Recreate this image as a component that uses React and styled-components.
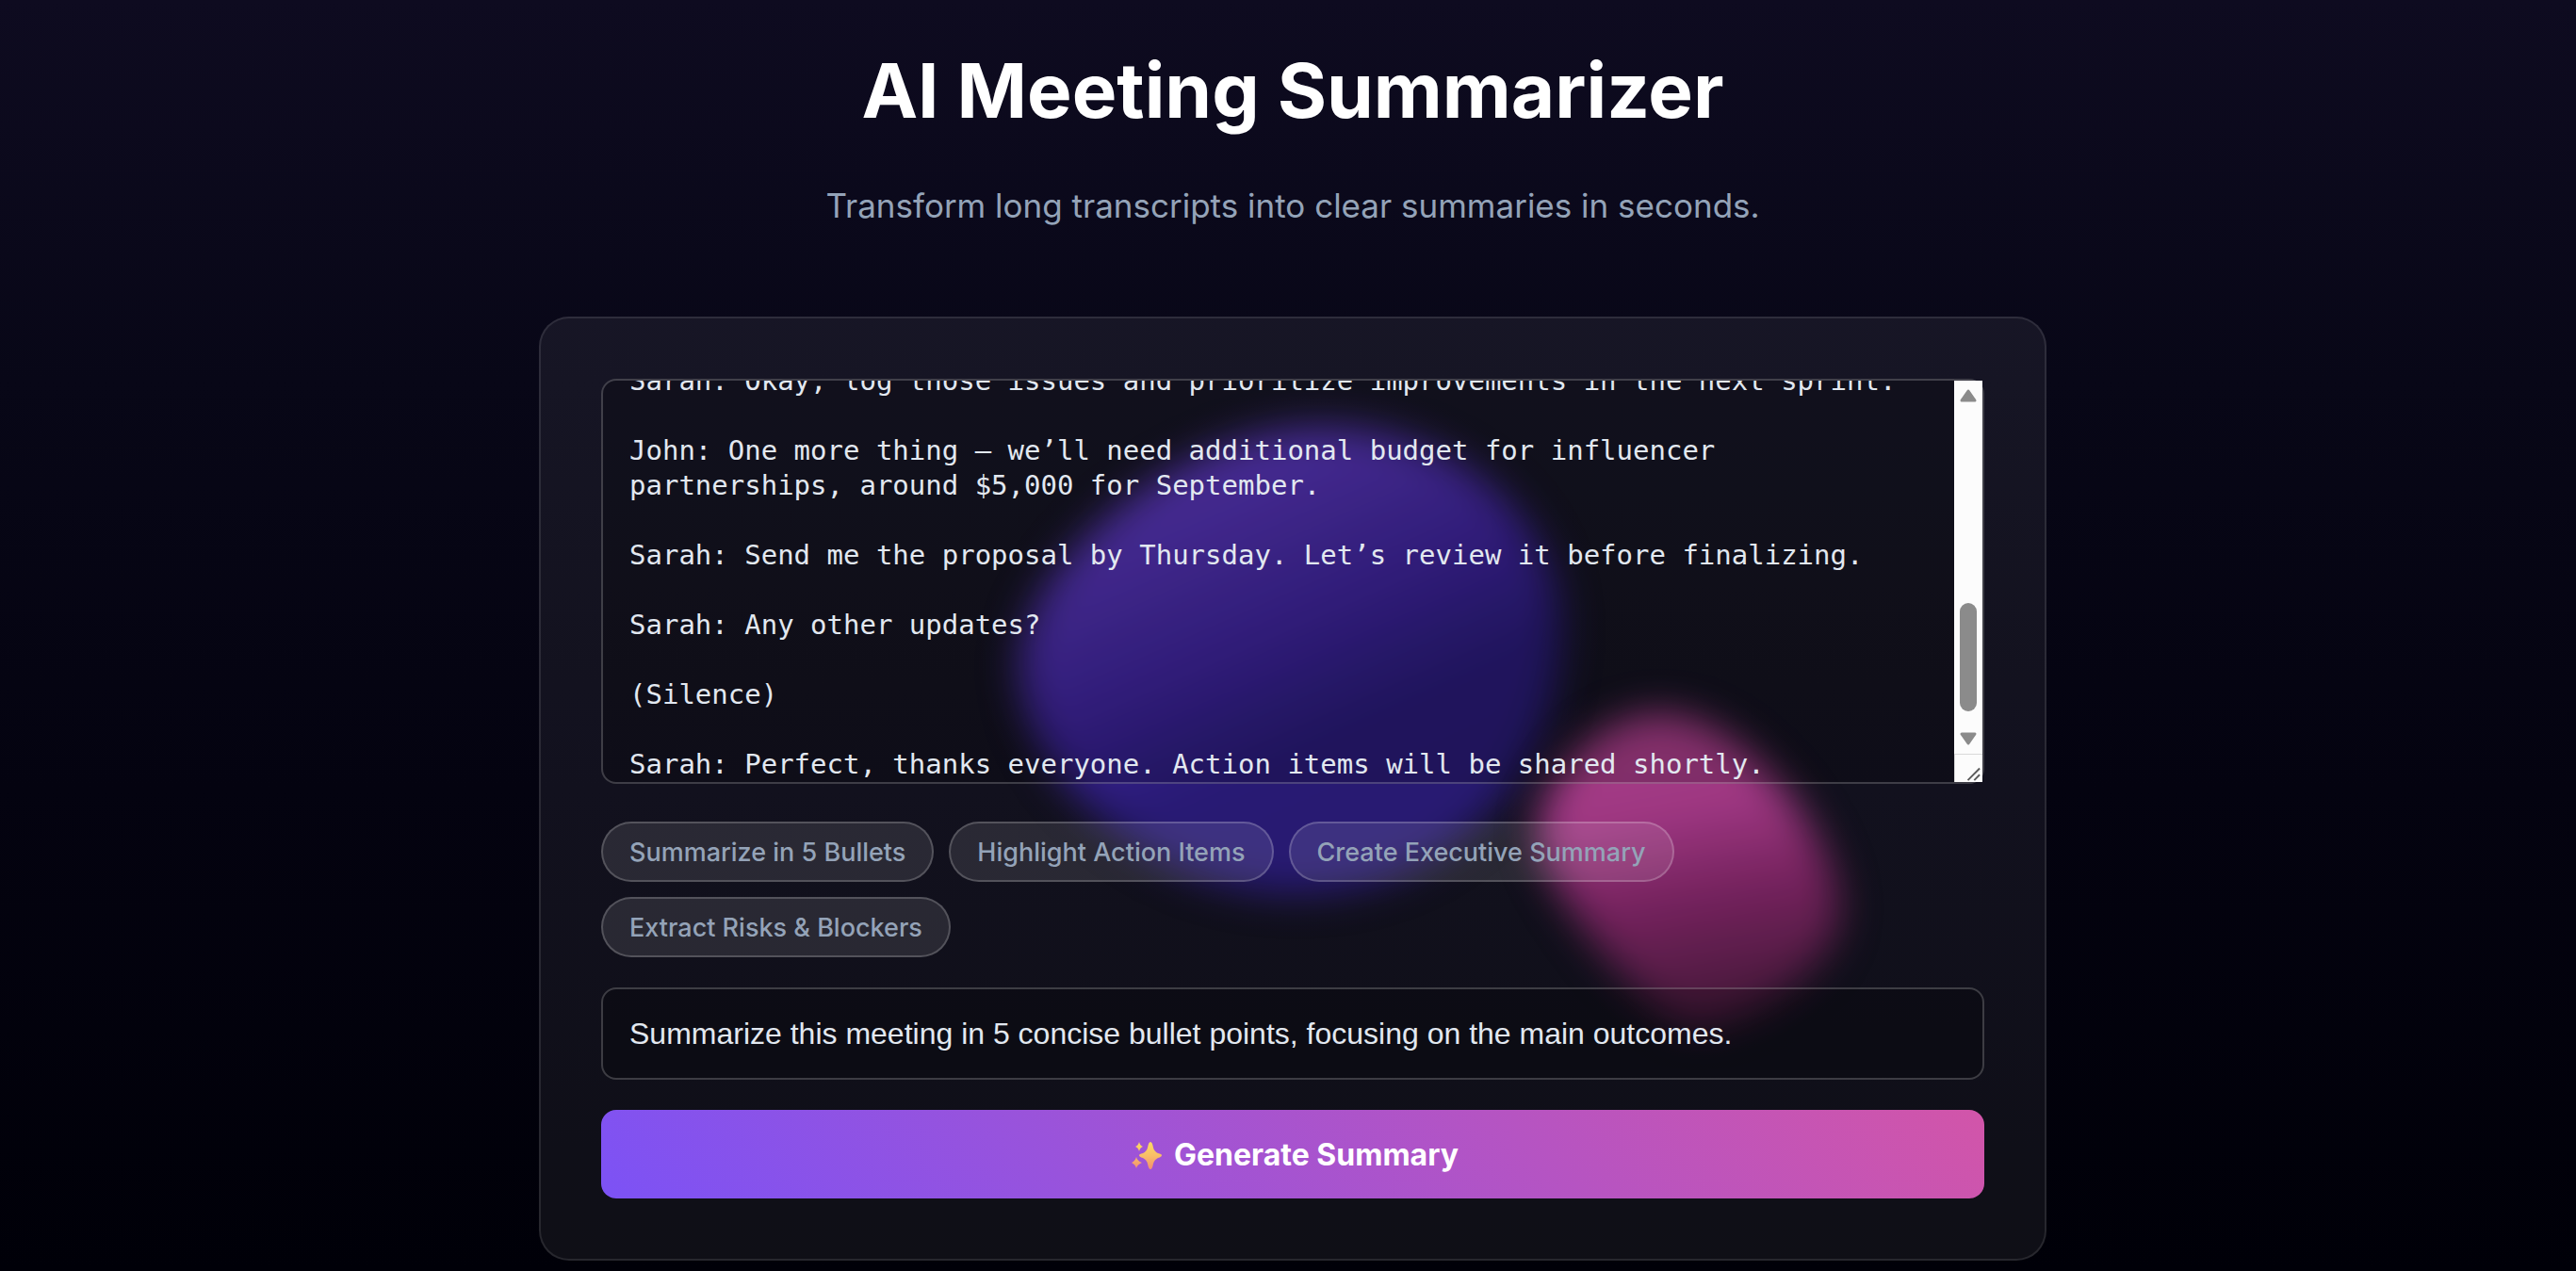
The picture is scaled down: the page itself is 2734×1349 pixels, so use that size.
import React, { useLayoutEffect, useRef, useState } from "react";
import styled, { createGlobalStyle } from "styled-components";

const GlobalStyle = createGlobalStyle`
  *, *::before, *::after { box-sizing: border-box; }
  html { background: #000008; }
  body { margin: 0; font-family: Inter, "Liberation Sans", sans-serif; }
`;

const Page = styled.main`
  min-height: 100vh;
  padding: 47px 0 11px 10px;
  display: flex;
  flex-direction: column;
  align-items: center;
  background: linear-gradient(180deg, #0e0b20 0%, #080717 30%, #040310 62%, #000008 100%);
`;

const Header = styled.header`
  display: flex;
  flex-direction: column;
  align-items: center;
  gap: 45px;
  margin-bottom: 90px;
  text-align: center;
`;

const Title = styled.h1`
  margin: 0;
  font-size: 80px;
  line-height: 98px;
  font-weight: 700;
  color: #fff;
`;

const Subtitle = styled.p`
  margin: 0;
  font-size: 35px;
  line-height: 56px;
  color: #94a3b8;
`;

const Stage = styled.div`
  position: relative;
  width: 100%;
  max-width: 1600px;
`;

const Blobs = styled.svg`
  position: absolute;
  top: 65px;
  left: 428px;
  width: 1020px;
  height: 780px;
`;

const Card = styled.form`
  position: relative;
  display: flex;
  flex-direction: column;
  gap: 32px;
  padding: 64px;
  border: 2px solid rgba(255, 255, 255, 0.1);
  border-radius: 32px;
  background: rgba(255, 255, 255, 0.06);
`;

const Transcript = styled.div`
  display: flex;
  height: 430px;
  margin-bottom: 8px;
  border: 2px solid rgba(255, 255, 255, 0.2);
  border-radius: 16px;
  background: rgba(0, 0, 0, 0.2);
`;

const TranscriptText = styled.textarea`
  flex: 1;
  min-width: 0;
  padding: 28px;
  border: 0;
  outline: 0;
  resize: none;
  background: transparent;
  color: #e2e8f0;
  font-family: "DejaVu Sans Mono", monospace;
  font-size: 29px;
  line-height: 37px;
  scrollbar-width: none;
`;

const ScrollColumn = styled.div`
  display: flex;
  flex-direction: column;
  align-items: center;
  width: 30px;
  background: #fcfcfc;
`;

const Arrow = styled.svg`
  width: 30px;
  height: 30px;
  flex: none;
  fill: #8b8b8b;
  stroke: #8b8b8b;
  stroke-width: 3;
  stroke-linejoin: round;
`;

const Rail = styled.div`
  flex: 1;
  display: flex;
  flex-direction: column;
  justify-content: flex-end;
  padding-bottom: 15px;
`;

const Thumb = styled.div`
  width: 18px;
  height: 115px;
  border-radius: 9px;
  background: #8b8b8b;
`;

const Grip = styled.svg`
  width: 30px;
  height: 30px;
  flex: none;
  border-top: 1px solid #d9d9d9;
  border-left: 1px solid #d9d9d9;
  stroke: #5c5c5c;
  stroke-width: 2;
`;

const Chips = styled.div`
  display: flex;
  flex-wrap: wrap;
  gap: 16px;
`;

const Chip = styled.button`
  height: 64px;
  padding: 0 28px;
  border: 2px solid rgba(255, 255, 255, 0.2);
  border-radius: 32px;
  background: rgba(255, 255, 255, 0.1);
  color: #94a3b8;
  font-family: inherit;
  font-size: 27px;
  font-weight: 500;
`;

const Prompt = styled.input`
  width: 100%;
  height: 98px;
  padding: 0 28px;
  border: 2px solid rgba(255, 255, 255, 0.2);
  border-radius: 16px;
  outline: 0;
  background: rgba(0, 0, 0, 0.2);
  color: #e2e8f0;
  font-family: "Liberation Sans", Arial, sans-serif;
  font-size: 32px;
`;

const Submit = styled.button`
  display: flex;
  align-items: center;
  justify-content: center;
  gap: 10px;
  height: 94px;
  border: 0;
  border-radius: 16px;
  background: linear-gradient(45deg, #7c52f5, #d255a9);
  color: #fff;
  font-family: inherit;
  font-size: 32px;
  font-weight: 700;
`;

const Sparkles = styled.svg`
  width: 40px;
  height: 40px;
`;

const TRANSCRIPT = [
  "Sarah: Okay, log those issues and prioritize improvements in the next sprint.",
  "John: One more thing – we’ll need additional budget for influencer partnerships, around $5,000 for September.",
  "Sarah: Send me the proposal by Thursday. Let’s review it before finalizing.",
  "Sarah: Any other updates?",
  "(Silence)",
  "Sarah: Perfect, thanks everyone. Action items will be shared shortly.",
].join("\n\n");

const PRESETS = [
  "Summarize in 5 Bullets",
  "Highlight Action Items",
  "Create Executive Summary",
  "Extract Risks & Blockers",
];

function Background() {
  return (
    <Blobs viewBox="1000 400 1020 780" aria-hidden="true">
      <defs>
        <linearGradient id="violet" gradientUnits="userSpaceOnUse" x1="1250" y1="520" x2="1400" y2="860">
          <stop offset="0" stopColor="#4e2ab2" />
          <stop offset="0.5" stopColor="#2f158f" />
          <stop offset="0.8" stopColor="#1b0c6c" />
          <stop offset="1" stopColor="#1b0c6a" />
        </linearGradient>
        <linearGradient id="pink" gradientUnits="userSpaceOnUse" x1="1760" y1="790" x2="1810" y2="1060">
          <stop offset="0" stopColor="#a0307f" />
          <stop offset="0.25" stopColor="#9a2c7c" />
          <stop offset="0.6" stopColor="#6d1554" />
          <stop offset="1" stopColor="#400b32" />
        </linearGradient>
        <filter id="soft" x="-20%" y="-20%" width="140%" height="140%" colorInterpolationFilters="sRGB">
          <feGaussianBlur stdDeviation="20" />
        </filter>
      </defs>
      <path
        filter="url(#soft)"
        fill="url(#violet)"
        d="M1405 452 C1545 452 1658 550 1656 670 C1653 830 1530 948 1375 948 C1220 948 1082 820 1082 705 C1082 600 1250 452 1405 452 Z"
      />
      <path
        filter="url(#soft)"
        fill="url(#pink)"
        d="M1762 756 C1850 756 1952 890 1952 965 C1952 1030 1850 1088 1798 1088 C1750 1088 1632 930 1632 885 C1632 830 1695 756 1762 756 Z"
      />
    </Blobs>
  );
}

export default function App() {
  const area = useRef(null);
  const [text, setText] = useState(TRANSCRIPT);
  const [prompt, setPrompt] = useState(
    "Summarize this meeting in 5 concise bullet points, focusing on the main outcomes."
  );

  useLayoutEffect(() => {
    area.current.scrollTop = 46;
  }, []);

  return (
    <>
      <GlobalStyle />
      <Page>
        <Header>
          <Title>AI Meeting Summarizer</Title>
          <Subtitle>Transform long transcripts into clear summaries in seconds.</Subtitle>
        </Header>
        <Stage>
          <Background />
          <Card onSubmit={(e) => e.preventDefault()}>
            <Transcript>
              <TranscriptText
                ref={area}
                aria-label="Transcript"
                spellCheck={false}
                value={text}
                onChange={(e) => setText(e.target.value)}
              />
              <ScrollColumn aria-hidden="true">
                <Arrow viewBox="0 0 30 30"><path d="M15 11 L22 21 H8 Z" /></Arrow>
                <Rail><Thumb /></Rail>
                <Arrow viewBox="0 0 30 30"><path d="M15 19 L22 9 H8 Z" /></Arrow>
                <Grip viewBox="0 0 30 30"><path d="M14 28 L27 15 M21 28 L27 22" /></Grip>
              </ScrollColumn>
            </Transcript>
            <Chips>
              {PRESETS.map((label) => (
                <Chip key={label} type="button">{label}</Chip>
              ))}
            </Chips>
            <Prompt aria-label="Prompt" value={prompt} onChange={(e) => setPrompt(e.target.value)} />
            <Submit type="submit">
              <Sparkles viewBox="0 0 40 40" aria-hidden="true">
                <defs>
                  <linearGradient id="gold" gradientUnits="userSpaceOnUse" x1="0" y1="8" x2="0" y2="36">
                    <stop offset="0" stopColor="#fbd863" />
                    <stop offset="0.5" stopColor="#f8bd67" />
                    <stop offset="1" stopColor="#f38d72" />
                  </linearGradient>
                </defs>
                <g fill="url(#gold)">
                  <path d="M25 7 Q27 7 28 13 Q29 17 33 19 Q37 20 37 21 Q37 23 33 24 Q29 26 28 30 Q27 36 25 36 Q23 36 22 30 Q21 26 17 24 Q13 23 13 21 Q13 20 17 19 Q21 17 22 13 Q23 7 25 7 Z" />
                  <path d="M13 7 Q14 11 17 12 Q14 13 13 17 Q12 13 9 12 Q12 11 13 7 Z" />
                  <path d="M10 23 Q11 27 16 29 Q11 31 10 35 Q9 31 5 29 Q9 27 10 23 Z" />
                </g>
              </Sparkles>
              Generate Summary
            </Submit>
          </Card>
        </Stage>
      </Page>
    </>
  );
}
